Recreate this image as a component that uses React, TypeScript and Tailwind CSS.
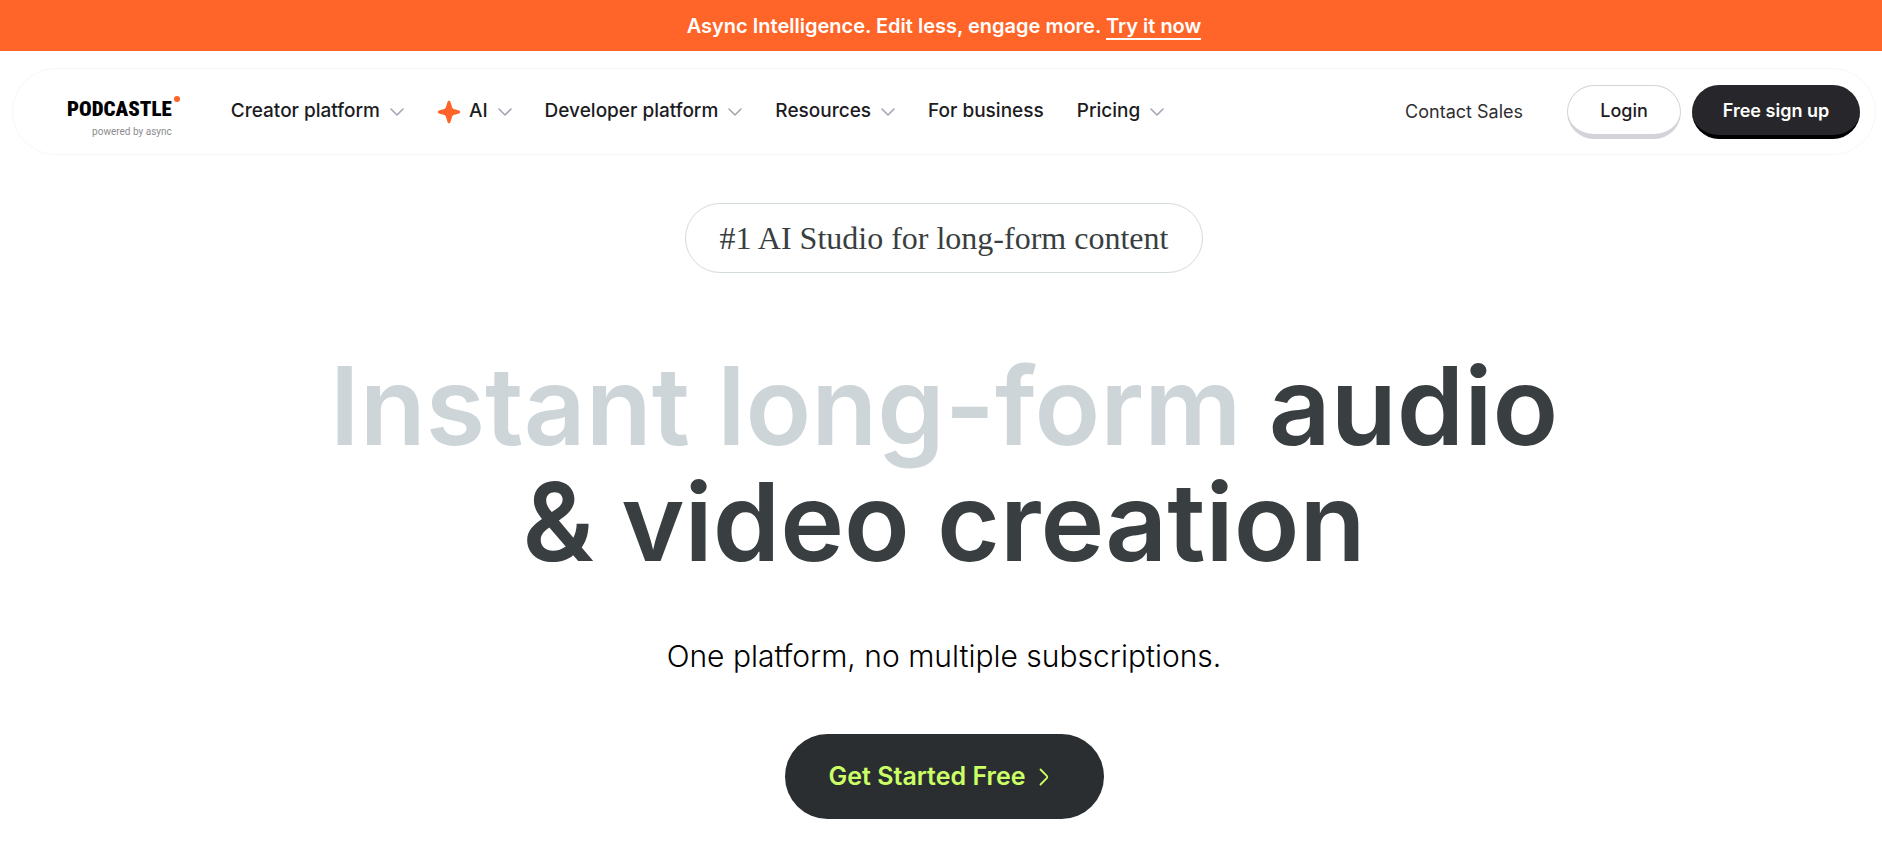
import React from "react";

type NavItem = { label: string; menu?: boolean; spark?: boolean };

const navItems: NavItem[] = [
  { label: "Creator platform", menu: true },
  { label: "AI", menu: true, spark: true },
  { label: "Developer platform", menu: true },
  { label: "Resources", menu: true },
  { label: "For business" },
  { label: "Pricing", menu: true },
];

function ChevronDown() {
  return (
    <svg className="h-2 w-3.5 shrink-0" viewBox="0 0 14 8" fill="none" aria-hidden="true">
      <path d="M1 1l6 6 6-6" stroke="#a5a5b2" strokeWidth="1.6" strokeLinecap="round" strokeLinejoin="round" />
    </svg>
  );
}

function Spark() {
  return (
    <svg className="h-6 w-6 shrink-0" viewBox="0 0 24 24" aria-hidden="true">
      <path
        d="M12 .8c.7 0 1.2.5 1.5 1.3l1.6 5.1c.3.9.8 1.4 1.7 1.7l5.1 1.6c.8.3 1.3.8 1.3 1.5s-.5 1.2-1.3 1.5l-5.1 1.6c-.9.3-1.4.8-1.7 1.7l-1.6 5.1c-.3.8-.8 1.3-1.5 1.3s-1.2-.5-1.5-1.3l-1.6-5.1c-.3-.9-.8-1.4-1.7-1.7l-5.1-1.6C1.3 13.2.8 12.7.8 12s.5-1.2 1.3-1.5l5.1-1.6c.9-.3 1.4-.8 1.7-1.7l1.6-5.1C10.8 1.3 11.3.8 12 .8z"
        fill="#ff6428"
      />
    </svg>
  );
}

function Logo() {
  return (
    <a href="#" aria-label="Podcastle, powered by async" className="flex items-start gap-0.5 pt-1.5">
      <span className="flex flex-col items-end">
        <span className="font-['Roboto_Condensed','Roboto',sans-serif] text-[21px] leading-[34px] font-black text-black">
          PODCASTLE
        </span>
        <span className="font-['Roboto',sans-serif] text-[10px] leading-3 text-[#8c8c8c]">powered by async</span>
      </span>
      <span className="mt-1 size-1.5 rounded-full bg-[#ff6428]" />
    </a>
  );
}

export default function App() {
  return (
    <div className="min-h-screen bg-white font-['Inter',sans-serif]">
      <div className="flex h-[51px] items-center justify-center bg-[#ff6428] pl-1.5 text-xl font-semibold text-white">
        <p>
          Async Intelligence. Edit less, engage more.{" "}
          <a href="#" className="border-b-2 border-white">
            Try it now
          </a>
        </p>
      </div>

      <div className="pl-1.5">
        <header className="mx-1.5 mt-[17px] flex h-[87px] items-center rounded-full border border-[#f7f7f8] pr-[15px] pl-[54px]">
          <Logo />
          <nav className="ml-[51px] flex items-center gap-[33px] text-[19px] font-medium text-[#1c1c1f]">
            {navItems.map((item) =>
              item.menu ? (
                <button key={item.label} type="button" className="flex items-center gap-2.5 whitespace-nowrap">
                  <span className="flex items-center gap-2">
                    {item.spark && <Spark />}
                    {item.label}
                  </span>
                  <ChevronDown />
                </button>
              ) : (
                <a key={item.label} href="#" className="whitespace-nowrap">
                  {item.label}
                </a>
              ),
            )}
          </nav>
          <div className="ml-auto flex items-center text-lg whitespace-nowrap">
            <a href="#" className="mr-11 text-[#2f2f33]">
              Contact Sales
            </a>
            <button
              type="button"
              className="mr-[11px] h-[54px] w-[114px] rounded-full border border-b-[5px] border-[#d3d3d9] bg-white pt-0.5 font-medium text-[#1c1c1f]"
            >
              Login
            </button>
            <button
              type="button"
              className="h-[54px] w-[168px] rounded-full border-b-4 border-black bg-[#27272b] pt-0.5 font-semibold text-white"
            >
              Free sign up
            </button>
          </div>
        </header>

        <main className="flex flex-col items-center pt-12 text-center">
          <p className="rounded-full border border-[#d3dadd] px-[34px] py-3.5 font-['Liberation_Serif',serif] text-[32px] leading-10 text-[#393e40]">
            #1 AI Studio for long-form content
          </p>
          <h1 className="mt-[75px] text-[108px] leading-[116px] font-semibold text-[#393e40]">
            <span className="text-[#cdd5d8]">Instant long-form</span> audio
            <br />
            &amp; video creation
          </h1>
          <p className="mt-14 text-[30px] leading-10 font-light text-black">
            One platform, no multiple subscriptions.
          </p>
          <button
            type="button"
            className="mt-[58px] flex h-[85px] w-[319px] items-center justify-center gap-3.5 rounded-full bg-[#2a2e31] pr-2.5 text-[25px] font-semibold text-[#ccff66]"
          >
            Get Started Free
            <svg className="h-[18px] w-2.5" viewBox="0 0 10 18" fill="none" aria-hidden="true">
              <path d="M1.5 1.5l6.500 6.700q.6.800 0 1.600L1.500 16.500" stroke="#ccff66" strokeWidth="1.800" strokeLinecap="round" />
            </svg>
          </button>
        </main>
      </div>
    </div>
  );
}
